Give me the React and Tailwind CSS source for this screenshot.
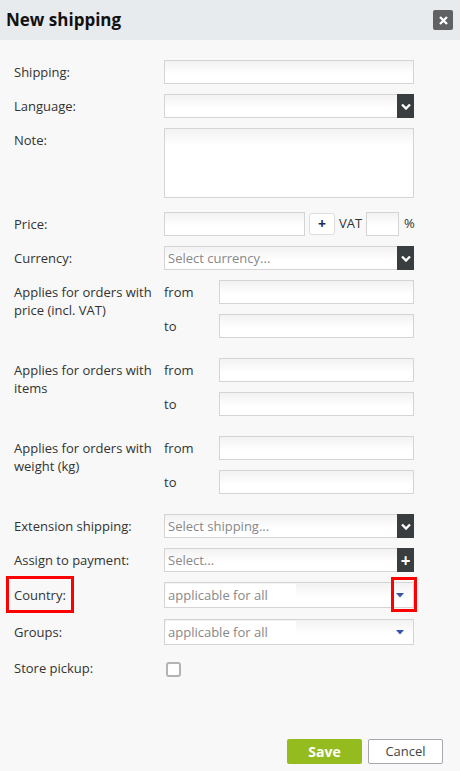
import React from "react";

const inputCls =
  "h-[24px] border border-[#d4d4d4] bg-gradient-to-b from-[#f2f2f2] to-white to-[60%]";

function Chevron() {
  return (
    <svg width="10" height="7" viewBox="0 0 10 7">
      <path d="M1 1.5 L5 5.5 L9 1.5" stroke="white" strokeWidth="2.4" fill="none" />
    </svg>
  );
}

function Label({ children, className = "" }) {
  return (
    <div className={"w-[164px] shrink-0 whitespace-nowrap pl-[14px] pt-[3px] leading-[18px] " + className}>
      {children}
    </div>
  );
}

function DarkSelect({ placeholder, plus }) {
  return (
    <div className={"flex w-[250px] " + inputCls}>
      <div className="flex-1 pl-[3px] leading-[22px] text-[#888]">{placeholder}</div>
      <div className="-my-px -mr-px flex w-[17px] items-center justify-center bg-[#383d40]">
        {plus ? (
          <span className="text-[17px] font-bold leading-none text-white">+</span>
        ) : (
          <Chevron />
        )}
      </div>
    </div>
  );
}

function RangeRows() {
  return (
    <div className="flex flex-col gap-[10px]">
      <div className="flex">
        <div className="w-[55px] pt-[3px] leading-[18px]">from</div>
        <div className={"w-[195px] " + inputCls} />
      </div>
      <div className="flex">
        <div className="w-[55px] pt-[3px] leading-[18px]">to</div>
        <div className={"w-[195px] " + inputCls} />
      </div>
    </div>
  );
}

function BlueSelect({ marked }) {
  return (
    <div className="relative flex h-[26px] w-[250px] items-center border border-[#d4d4d4] bg-gradient-to-b from-[#f2f2f2] to-white to-[60%]">
      <div className="ml-px h-[22px] w-[130px] bg-white pl-[2px] leading-[22px] text-[#888]">
        applicable for all
      </div>
      <div className="flex-1" />
      <svg width="8" height="5" viewBox="0 0 8 5" className="mr-[9px]">
        <path d="M0 0 H8 L4 4.5 Z" fill="#3553ad" />
      </svg>
      {marked && (
        <div className="absolute left-[226px] top-[-6px] h-[35px] w-[26px] border-[3px] border-[#f00]" />
      )}
    </div>
  );
}

export default function App() {
  return (
    <div
      className="flex h-[771px] w-[460px] flex-col bg-[#f8f8f8] text-[13px] text-[#333]"
      style={{ fontFamily: '"Open Sans", sans-serif' }}
    >
      <div className="flex h-[40px] shrink-0 items-center justify-between bg-[#e8ebee] pl-[6px] pr-[7px]">
        <div className="text-[17px] font-bold text-[#111]">New shipping</div>
        <div className="flex h-[20px] w-[20px] items-center justify-center rounded-[2px] bg-[#5f6163]">
          <svg width="9" height="9" viewBox="0 0 9 9">
            <path d="M1 1 L8 8 M8 1 L1 8" stroke="white" strokeWidth="2.3" />
          </svg>
        </div>
      </div>

      <div className="flex flex-col pt-[20px]">
        <div className="flex">
          <Label>Shipping:</Label>
          <div className={"w-[250px] " + inputCls} />
        </div>
        <div className="mt-[10px] flex">
          <Label>Language:</Label>
          <DarkSelect placeholder="" />
        </div>
        <div className="mt-[10px] flex">
          <Label>Note:</Label>
          <div className="h-[70px] w-[250px] border border-[#d4d4d4] bg-gradient-to-b from-[#f2f2f2] to-white to-[25%]" />
        </div>
        <div className="mt-[14px] flex">
          <Label>Price:</Label>
          <div className="flex items-center">
            <div className={"w-[141px] " + inputCls} />
            <div className="ml-[4px] flex h-[22px] w-[26px] items-center justify-center rounded-[3px] border border-[#ddd] bg-white text-[14px] font-bold leading-none text-[#1a2a55]">
              +
            </div>
            <div className="ml-[4px] w-[27px]">VAT</div>
            <div className={"w-[33px] " + inputCls} />
            <div className="ml-[5px]">%</div>
          </div>
        </div>
        <div className="mt-[10px] flex">
          <Label>Currency:</Label>
          <DarkSelect placeholder="Select currency..." />
        </div>
        <div className="mt-[10px] flex">
          <Label>
            Applies for orders with
            <br />
            price (incl. VAT)
          </Label>
          <RangeRows />
        </div>
        <div className="mt-[20px] flex">
          <Label>
            Applies for orders with
            <br />
            items
          </Label>
          <RangeRows />
        </div>
        <div className="mt-[20px] flex">
          <Label>
            Applies for orders with
            <br />
            weight (kg)
          </Label>
          <RangeRows />
        </div>
        <div className="mt-[20px] flex">
          <Label>Extension shipping:</Label>
          <DarkSelect placeholder="Select shipping..." />
        </div>
        <div className="mt-[10px] flex">
          <Label>Assign to payment:</Label>
          <DarkSelect placeholder="Select..." plus />
        </div>
        <div className="mt-[10px] flex">
          <Label className="relative">
            <div className="pt-px">Country:</div>
            <div className="absolute left-[6px] top-[-6px] h-[37px] w-[68px] border-[3px] border-[#f00]" />
          </Label>
          <BlueSelect marked />
        </div>
        <div className="mt-[11px] flex">
          <Label className="pt-[4px]">Groups:</Label>
          <BlueSelect />
        </div>
        <div className="mt-[11px] flex">
          <Label>Store pickup:</Label>
          <div className="ml-[2px] mt-[6px] h-[15px] w-[15px] rounded-[3px] border-2 border-[#b3b3b3] bg-white" />
        </div>
      </div>

      <div className="flex-1" />
      <div className="flex justify-end gap-[6px] pb-[7px] pr-[17px]">
        <div className="flex h-[25px] w-[75px] items-center justify-center rounded-[2px] bg-[#95bc1e] text-[14px] font-bold text-white">
          Save
        </div>
        <div className="flex h-[25px] w-[75px] items-center justify-center rounded-[2px] border border-[#a6a8b0] bg-white text-[#444]">
          Cancel
        </div>
      </div>
    </div>
  );
}
